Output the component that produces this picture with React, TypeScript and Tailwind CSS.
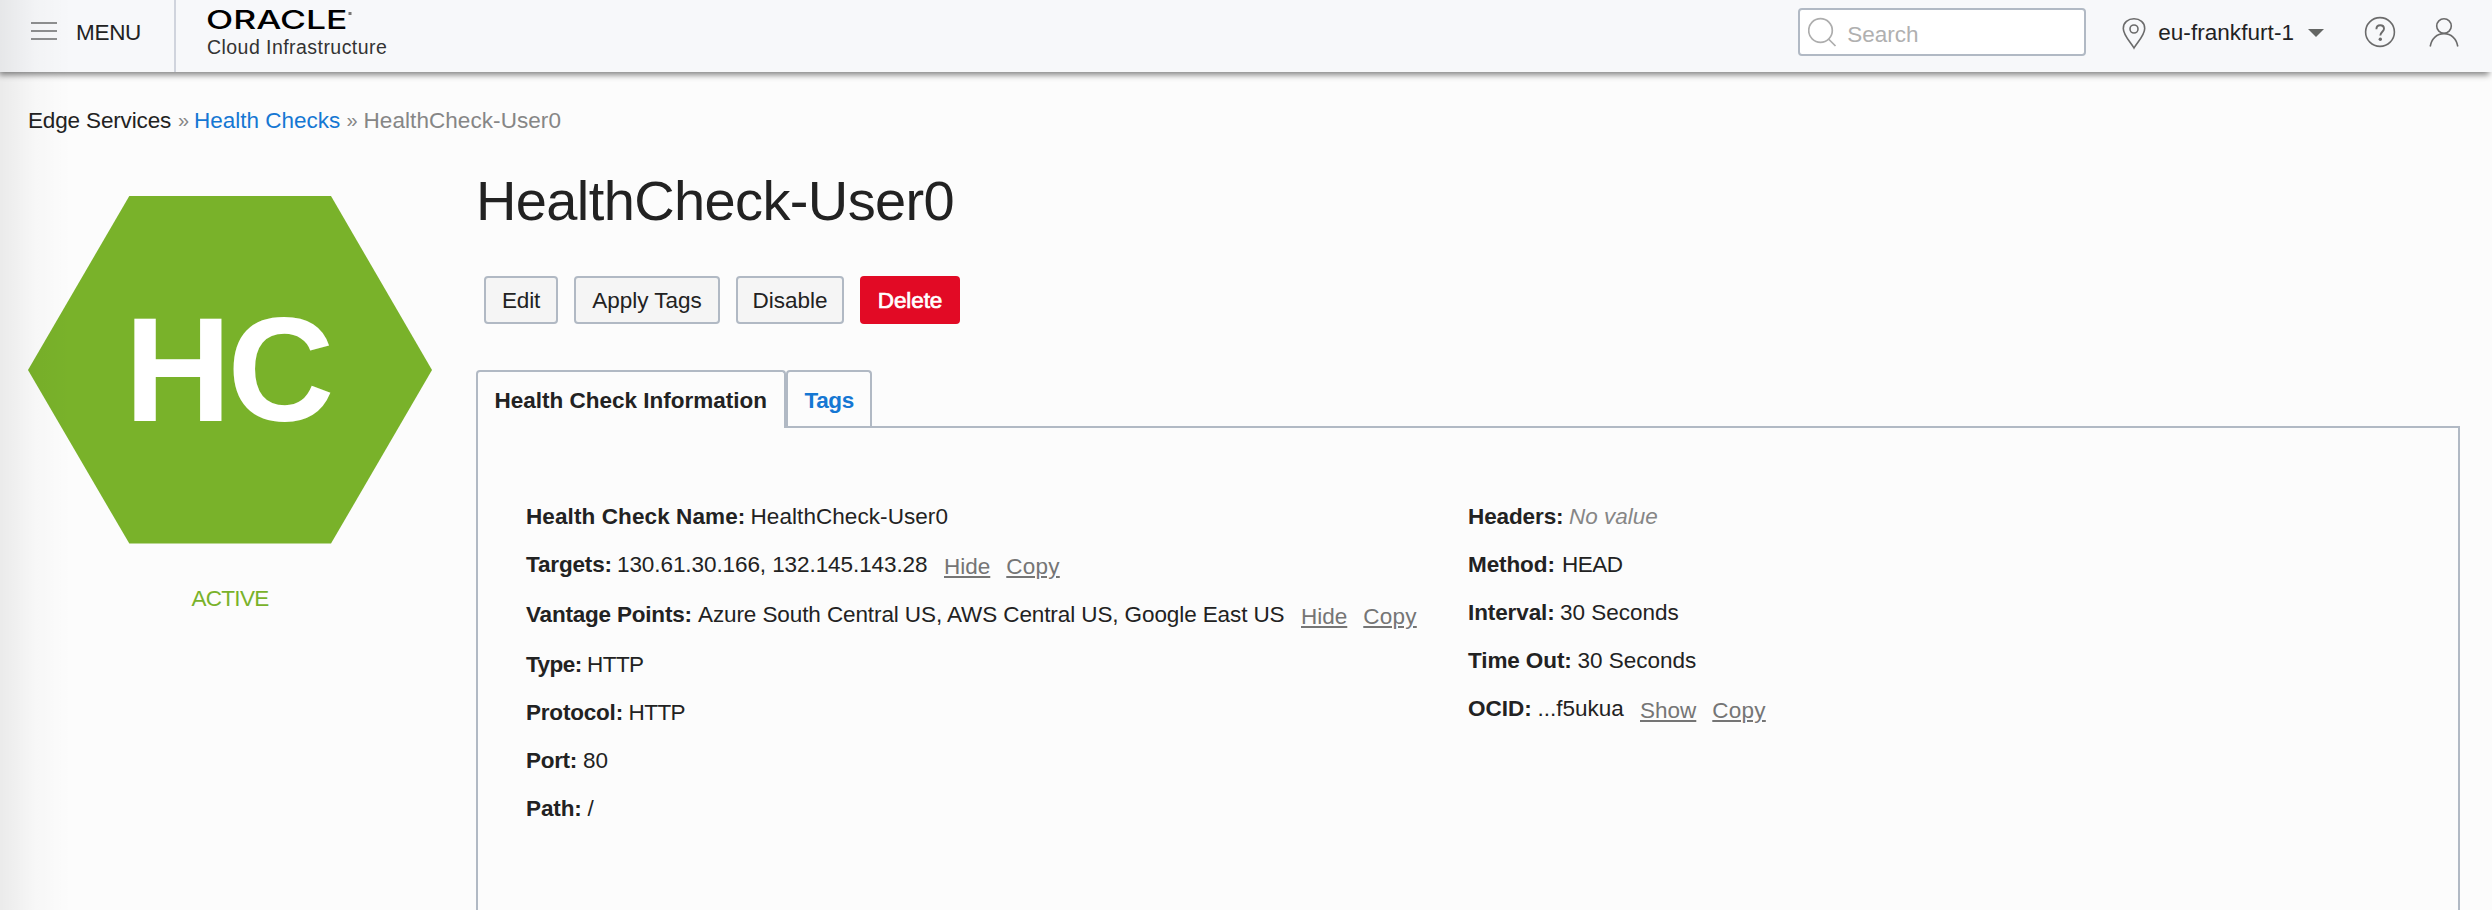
import type { ReactNode } from "react";

function Field({ label, labelClass, children, tall }: { label: string; labelClass: string; children: ReactNode; tall?: boolean }) {
  return (
    <div className={tall ? "flex h-[50px]" : "flex h-12"}>
      <dt className={`shrink-0 font-bold ${labelClass}`}>{label}</dt>
      <dd className="flex">{children}</dd>
    </div>
  );
}

function ActionLinks({ first }: { first: string }) {
  return (
    <span className="mt-[2px] flex gap-4 text-[#757575]">
      <a className="underline decoration-2 underline-offset-[2px]">{first}</a>
      <a className="tracking-[0.24px] underline decoration-2 underline-offset-[2px]">Copy</a>
    </span>
  );
}

function Header() {
  return (
    <header className="relative z-10 h-[72px] shrink-0 bg-[#f7f8fa] shadow-[-2px_4px_6px_-1px_rgba(0,0,0,0.47)]">
      <div className="flex h-full">
        <div className="flex h-full w-[176px] border-r-2 border-[#d0d4dd] pl-[31px]">
          <svg className="mt-[22px] h-[18px] w-[26px]" viewBox="0 0 26 18" fill="none" stroke="#6c6c6d" strokeWidth="1.7">
            <path d="M0 1H26M0 9H26M0 17H26" />
          </svg>
          <span className="ml-[19px] leading-[65px] tracking-[-0.3px]">MENU</span>
        </div>
        <div className="flex flex-col pl-[31px]">
          <svg className="h-8 w-[150px] overflow-visible" viewBox="0 0 150 32">
            <text
              x="-1"
              y="29.2"
              textLength="141.5"
              lengthAdjust="spacingAndGlyphs"
              fontFamily="Inter, sans-serif"
              fontWeight="500"
              fontSize="25"
              fill="#000"
            >
              ORACLE
            </text>
            <rect x="141.5" y="12" width="3" height="3" fill="#777" />
          </svg>
          <span className="mt-[3px] text-[19.5px] leading-[24px] tracking-[0.45px] text-[#333]">Cloud Infrastructure</span>
        </div>
        <div className="ml-auto flex h-16 items-center">
          <div className="flex h-12 w-[288px] items-center rounded-[4px] border-2 border-[#b1b9c4] bg-white pl-[8px]">
            <svg className="h-[30px] w-[30px]" viewBox="0 0 30 30" fill="none" stroke="#adadad" strokeWidth="1.7">
              <circle cx="12.5" cy="13.5" r="11.8" />
              <path d="M20.5 22L27.5 29" />
            </svg>
            <span className="mt-[5px] ml-[9px] text-[#b0b0b0]">Search</span>
          </div>
          <svg className="mt-[2px] ml-[35px] h-[34px] w-[26px]" viewBox="0 0 26 34" fill="none" stroke="#6b6b6b" strokeWidth="1.6">
            <path d="M13 32C10.5 27 2.3 19.5 2.3 12.4C2.3 6.3 7.1 2.8 13 2.8S23.7 6.3 23.7 12.4C23.7 19.5 15.5 27 13 32Z" />
            <circle cx="13" cy="13" r="4" />
          </svg>
          <span className="ml-[11px] pt-px tracking-[0.05px]">eu-frankfurt-1</span>
          <svg className="mt-[2px] ml-[14px] h-[8px] w-4" viewBox="0 0 16 8">
            <path d="M0 0H16L8 8Z" fill="#646664" />
          </svg>
          <svg className="ml-[40px] h-8 w-8" viewBox="0 0 32 32" fill="none" stroke="#6b6b6b" strokeWidth="1.6">
            <circle cx="16" cy="16" r="14.4" />
            <path d="M12.4 13.2C12.4 10.8 14 9.3 16.2 9.3S20 10.8 20 12.8C20 15.6 16.3 16 16.3 19.6" strokeWidth="1.9" />
            <circle cx="16.3" cy="23.2" r="1.7" fill="#6b6b6b" stroke="none" />
          </svg>
          <svg className="mr-[33px] ml-[33px] h-[30px] w-[30px]" viewBox="0 0 30 30" fill="none" stroke="#6b6b6b" strokeWidth="1.6">
            <circle cx="15" cy="9" r="7.3" />
            <path d="M1.2 29.5C2.5 21.5 8 16.6 15 16.6S27.5 21.5 28.8 29.5" />
          </svg>
        </div>
      </div>
    </header>
  );
}

const button = "flex h-12 items-center justify-center rounded-[4px] border-2 border-[#b1b9c4] bg-[#f5f5f5] pt-px";

export default function App() {
  return (
    <div className="relative flex h-[910px] w-[2492px] flex-col overflow-hidden bg-[#fcfcfc] font-['Liberation_Sans',Arial,sans-serif] text-[22.5px] whitespace-nowrap text-[#222]">
      <Header />
      <nav className="mt-8 flex h-8 pl-[28px] leading-[33px]">
        <span className="w-[150px] tracking-[-0.15px]">Edge Services</span>
        <span className="w-4 text-[20px] text-[#868686]">»</span>
        <a className="w-[152.5px] text-[#1577d3]">Health Checks</a>
        <span className="w-[17px] text-[20px] text-[#868686]">»</span>
        <span className="tracking-[0.07px] text-[#868686]">HealthCheck-User0</span>
      </nav>
      <div className="flex min-h-0 flex-1 gap-11 pr-8 pl-7">
        <aside className="flex w-[404px] shrink-0 flex-col items-center pt-[60px]">
          <svg className="h-[348px] w-[404px]" viewBox="0 0 404 348">
            <path d="M101.3 0H303L404 174L303 347.6H101.3L0 174Z" fill="#79b22a" />
            <text x="96.5" y="225" fontFamily="Liberation Sans, Arial, sans-serif" fontWeight="700" fontSize="148" letterSpacing="-4" fill="#fff">
              HC
            </text>
          </svg>
          <span className="mt-[39px] leading-[31px] tracking-[-0.7px] text-[#79b22a]">ACTIVE</span>
        </aside>
        <main className="flex min-w-0 flex-1 flex-col">
          <h1 className="mt-[33px] text-[56px] leading-[64px] tracking-[-0.62px]">HealthCheck-User0</h1>
          <div className="mt-[43px] ml-2 flex gap-4">
            <button className={`${button} w-[74px] tracking-[-0.15px]`}>Edit</button>
            <button className={`${button} w-[146px]`}>Apply Tags</button>
            <button className={`${button} w-[108px]`}>Disable</button>
            <button className="flex h-12 w-[100px] items-center justify-center rounded-[4px] bg-[#e20a25] pt-px tracking-[-0.1px] text-white [-webkit-text-stroke:0.7px_white]">
              Delete
            </button>
          </div>
          <div className="relative z-10 mt-[46px] -mb-[2px] flex items-start font-bold leading-[57px]">
            <div className="h-[58px] w-[310px] rounded-t-[4px] border-2 border-b-0 border-[#b1b9c4] bg-[#fcfcfc] pl-[16.5px]">
              Health Check Information
            </div>
            <div className="h-[56px] w-[86px] rounded-t-[4px] border-2 border-b-0 border-[#b1b9c4] pl-[16.5px] tracking-[-0.4px] text-[#1577d3]">Tags</div>
          </div>
          <section className="flex flex-1 border-2 border-b-0 border-[#b1b9c4] pt-16 pl-[48px] leading-[49px]">
            <dl className="w-[942px] shrink-0">
              <Field label="Health Check Name:" labelClass="w-[224.5px] tracking-[0.1px]">
                <span className="tracking-[0.07px]">HealthCheck-User0</span>
              </Field>
              <Field tall label="Targets:" labelClass="w-[91px] tracking-[-0.15px]">
                <span className="w-[327px] tracking-[-0.08px]">130.61.30.166, 132.145.143.28</span>
                <ActionLinks first="Hide" />
              </Field>
              <Field tall label="Vantage Points:" labelClass="w-[172px] tracking-[-0.2px]">
                <span className="w-[603px] tracking-[-0.1px]">Azure South Central US, AWS Central US, Google East US</span>
                <ActionLinks first="Hide" />
              </Field>
              <Field label="Type:" labelClass="w-[61px] tracking-[-0.5px]">
                <span className="tracking-[-0.55px]">HTTP</span>
              </Field>
              <Field label="Protocol:" labelClass="w-[102.5px] tracking-[-0.2px]">
                <span className="tracking-[-0.55px]">HTTP</span>
              </Field>
              <Field label="Port:" labelClass="w-[57px] tracking-[-0.3px]">80</Field>
              <Field label="Path:" labelClass="w-[61.5px] tracking-[-0.1px]">/</Field>
            </dl>
            <dl>
              <Field label="Headers:" labelClass="w-[101px] tracking-[-0.1px]">
                <em className="text-[#868686]">No value</em>
              </Field>
              <Field label="Method:" labelClass="w-[94px] tracking-[-0.1px]">
                <span className="tracking-[-0.5px]">HEAD</span>
              </Field>
              <Field label="Interval:" labelClass="w-[92px] tracking-[-0.1px]">30 Seconds</Field>
              <Field label="Time Out:" labelClass="w-[109.5px] tracking-[-0.1px]">30 Seconds</Field>
              <Field tall label="OCID:" labelClass="w-[69.5px]">
                <span className="w-[102.5px]">...f5ukua</span>
                <ActionLinks first="Show" />
              </Field>
            </dl>
          </section>
        </main>
      </div>
      <div className="pointer-events-none absolute inset-y-0 left-0 z-20 w-[72px] bg-linear-to-r from-black/7 via-black/2 to-transparent" />
    </div>
  );
}
